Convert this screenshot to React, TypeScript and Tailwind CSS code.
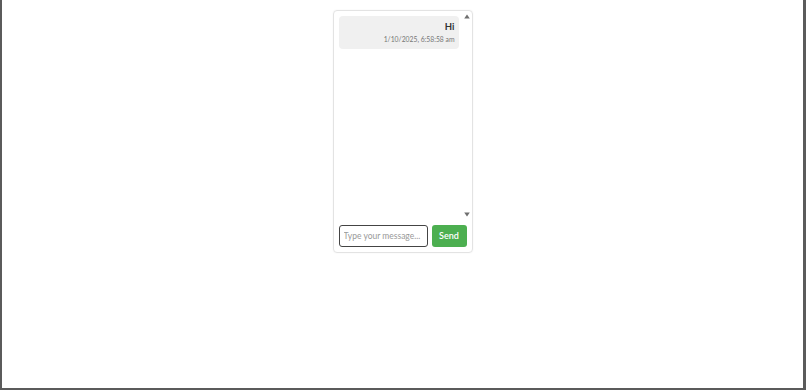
import { useState } from "react";

interface Message {
  text: string;
  time: string;
}

function Arrow({ up }: { up?: boolean }) {
  return (
    <svg width="6" height="5" viewBox="0 0 6 5" className="block">
      <path d={up ? "M3 0.5 L5.8 4.5 L0.2 4.5 Z" : "M0.2 0.5 L5.8 0.5 L3 4.5 Z"} fill="#6f6f6f" />
    </svg>
  );
}

export default function App() {
  const [messages] = useState<Message[]>([
    { text: "Hi", time: "1/10/2025, 6:58:58 am" },
  ]);
  const [draft, setDraft] = useState("");

  return (
    <div className="box-border h-[390px] w-full border-b-2 border-l-2 border-r-[3px] border-[#5b5b5b] bg-white font-['Lato',sans-serif]">
      <div className="flex justify-center pt-[10px]">
        <div className="flex w-[140px] flex-col rounded-[4px] border border-[#e3e3e3] shadow-[0_0_2px_rgba(0,0,0,0.06)]">
          {/* message list with scrollbar */}
          <div className="flex h-[209px]">
            <div className="flex-1 overflow-hidden py-[5px] pl-[5px] pr-[4px]">
              {messages.map((m, i) => (
                <div
                  key={i}
                  className="mb-[5px] flex flex-col items-end rounded-[4px] bg-[#f0f0f0] px-[4px] pb-[3px] pt-[4px]"
                >
                  <span className="text-[9.5px] font-bold leading-[13px] text-[#333]">
                    {m.text}
                  </span>
                  <span className="text-[6.8px] leading-[13px] text-[#777]">
                    {m.time}
                  </span>
                </div>
              ))}
            </div>
            <div className="flex w-[9px] flex-col items-center justify-between pb-[3px] pt-[3px]">
              <Arrow up />
              <Arrow />
            </div>
          </div>

          {/* composer */}
          <div className="flex gap-[4px] px-[5px] pb-[5px] pt-[5px]">
            <input
              value={draft}
              onChange={(e) => setDraft(e.target.value)}
              placeholder="Type your message..."
              autoFocus
              className="h-[22px] w-[89px] rounded-[3px] border-[1.5px] border-[#444] px-[4px] text-[8.5px] text-[#333] outline-none placeholder:text-[#999]"
            />
            <button
              type="button"
              className="h-[22px] w-[35px] rounded-[3px] bg-[#4caf50] text-[9px] font-semibold text-white"
            >
              Send
            </button>
          </div>
        </div>
      </div>
    </div>
  );
}
